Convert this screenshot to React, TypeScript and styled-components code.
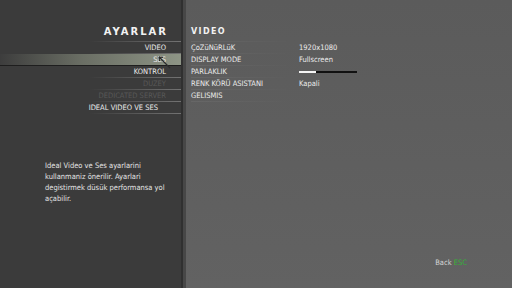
import styled, { createGlobalStyle } from 'styled-components';

const GlobalStyle = createGlobalStyle`
  html, body {
    margin: 0;
    padding: 0;
    width: 512px;
    height: 288px;
    overflow: hidden;
    background: #5d5d5d;
  }
  body {
    font-family: "DejaVu Sans Condensed", "DejaVu Sans", sans-serif;
    font-stretch: condensed;
  }
`;

const menuItems = [
  { label: 'VIDEO' },
  { label: 'SES', active: true },
  { label: 'KONTROL' },
  { label: 'DUZEY', disabled: true },
  { label: 'DEDICATED SERVER', disabled: true },
  { label: 'IDEAL VIDEO VE SES', inset: true },
];

const settings = [
  { label: 'ÇoZüNüRLüK', value: '1920x1080' },
  { label: 'DISPLAY MODE', value: 'Fullscreen' },
  { label: 'PARLAKLIK', slider: 0.29 },
  { label: 'RENK KÖRÜ ASISTANI', value: 'Kapali' },
  { label: 'GELISMIS' },
];

const Screen = styled.div`
  display: flex;
  width: 512px;
  height: 288px;
`;

const LeftPanel = styled.div`
  position: relative;
  width: 181px;
  background: #3b3b3b;
  display: flex;
  flex-direction: column;
  padding-top: 26px;
  box-sizing: border-box;
`;

const Divider = styled.div`
  width: 5px;
  background: linear-gradient(to right, #303030 0 2px, #474747 2px 5px);
`;

const RightPanel = styled.div`
  flex: 1;
  background: linear-gradient(to bottom, #5b5b5b, #626262);
  display: flex;
  flex-direction: column;
  padding-top: 26px;
  padding-left: 5px;
`;

const Title = styled.div<{ $align: 'left' | 'right'; $size: number }>`
  height: 15px;
  line-height: 12px;
  font-family: "DejaVu Sans", sans-serif;
  font-stretch: normal;
  font-weight: bold;
  font-size: ${({ $size }) => $size}px;
  letter-spacing: ${({ $size }) => ($size > 9 ? 2 : 1.4)}px;
  color: #f2f2f2;
  text-align: ${({ $align }) => $align};
  padding-right: ${({ $align }) => ($align === 'right' ? 13 : 0)}px;
`;

const Rule = styled.div<{ $dir: 'left' | 'right'; $width: number; $strength?: number }>`
  height: 1px;
  width: ${({ $width }) => $width}px;
  align-self: ${({ $dir }) => ($dir === 'left' ? 'flex-end' : 'flex-start')};
  background: linear-gradient(
    to ${({ $dir }) => $dir},
    rgba(120, 120, 120, ${({ $strength }) => $strength ?? 0.9}),
    rgba(120, 120, 120, 0)
  );
`;

const MenuRow = styled.div<{ $active?: boolean; $disabled?: boolean; $inset?: boolean }>`
  height: 11px;
  line-height: 11px;
  font-size: 7.5px;
  text-align: right;
  padding-right: ${({ $inset }) => ($inset ? 23 : 15)}px;
  color: ${({ $disabled }) => ($disabled ? '#585858' : '#ececec')};
  background: ${({ $active }) =>
    $active ? 'linear-gradient(to right, #3d3d3d, #6a6e64 45%, #8e9586)' : 'transparent'};
`;

const DarkRule = styled.div`
  height: 1px;
  background: #1e1e1e;
`;

const Description = styled.div`
  margin-top: 46px;
  padding-left: 45px;
  font-size: 7.5px;
  line-height: 11px;
  color: #e4e4e4;
`;

const Cursor = styled.svg`
  position: absolute;
  left: 158px;
  top: 56px;
`;

const SettingRow = styled.div`
  display: flex;
  align-items: center;
  height: 11px;
  font-size: 7.5px;
  color: #ececec;
`;

const Label = styled.div`
  width: 108px;
`;

const Value = styled.div``;

const SliderTrack = styled.div`
  width: 58px;
  height: 2px;
  background: #111;
  display: flex;
`;

const SliderFill = styled.div`
  height: 100%;
  background: #f4f4f4;
`;

const Footer = styled.div`
  margin-top: auto;
  align-self: flex-end;
  padding-right: 45px;
  padding-bottom: 21px;
  font-size: 7.5px;
  color: #d6d6d6;
`;

const Key = styled.span`
  color: #35b437;
`;

export default function App() {
  return (
    <>
      <GlobalStyle />
      <Screen>
        <LeftPanel>
          <Title $align="right" $size={10}>AYARLAR</Title>
          <Rule $dir="left" $width={92} />
          {menuItems.map(item => (
            <div key={item.label}>
              <MenuRow $active={item.active} $disabled={item.disabled} $inset={item.inset}>
                {item.label}
              </MenuRow>
              {item.active ? <DarkRule /> : <Rule $dir="left" $width={92} style={{ marginLeft: 89 }} />}
            </div>
          ))}
          <Description>
            Ideal Video ve Ses ayarlarini
            <br />
            kullanmaniz önerilir. Ayarlari
            <br />
            degistirmek düsük performansa yol
            <br />
            açabilir.
          </Description>
          <Cursor width="14" height="14" viewBox="0 0 14 14">
            <path d="M1 1 L12 12 M1 1 L1.5 5 M1 1 L5 1.5" stroke="#2c2c2c" strokeWidth="1.2" fill="none" />
          </Cursor>
        </LeftPanel>
        <Divider />
        <RightPanel>
          <Title $align="left" $size={8}>VIDEO</Title>
          <Rule $dir="right" $width={100} $strength={0.35} />
          {settings.map(s => (
            <div key={s.label}>
              <SettingRow>
                <Label>{s.label}</Label>
                {s.value && <Value>{s.value}</Value>}
                {s.slider !== undefined && (
                  <SliderTrack>
                    <SliderFill style={{ width: `${s.slider * 100}%` }} />
                  </SliderTrack>
                )}
              </SettingRow>
              <Rule $dir="right" $width={100} $strength={0.35} />
            </div>
          ))}
          <Footer>
            Back <Key>ESC</Key>
          </Footer>
        </RightPanel>
      </Screen>
    </>
  );
}
